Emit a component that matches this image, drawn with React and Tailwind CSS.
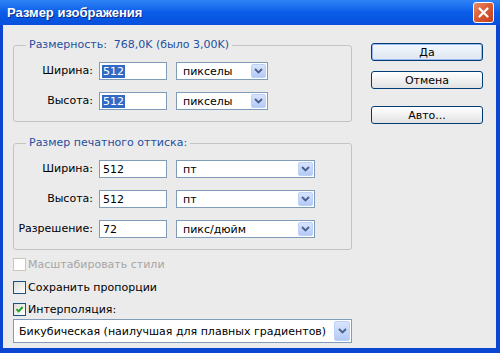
const ui = "font-['DejaVu_Sans',sans-serif] text-[11px]"

function Arrow({ big }) {
  return (
    <span
      className={`absolute right-[1px] top-[1px] bottom-[1px] flex items-center justify-center rounded-[2px] border border-[#bcd0f8] bg-gradient-to-b from-[#d8e4fd] to-[#b3c9f6] ${big ? 'w-[16px]' : 'w-[15px]'}`}
    >
      <svg width="9" height="6" viewBox="0 0 9 6">
        <path d="M1 1 L4.5 4.5 L8 1" fill="none" stroke="#4a5f8a" strokeWidth="1.8" />
      </svg>
    </span>
  )
}

function Select({ value, width, tall }) {
  return (
    <div
      className={`relative flex items-center border border-[#7f9db9] bg-white text-black ${tall ? 'h-[24px] pl-[5px]' : 'h-[18px] pl-[6px]'}`}
      style={{ width }}
    >
      <span className="leading-none">{value}</span>
      <Arrow big={tall} />
    </div>
  )
}

function Field({ label, value, selected, unit, selWidth }) {
  return (
    <div className="flex items-center h-[18px]">
      <span className="w-[79px] text-right text-black">{label}</span>
      <div className="ml-[6px] w-[68px] h-[18px] border border-[#7f9db9] bg-white flex items-center pl-[2px]">
        {selected ? (
          <span className="bg-[#316ac5] text-white leading-[13px] px-[1px]">{value}</span>
        ) : (
          <span className="text-black leading-[13px] px-[1px]">{value}</span>
        )}
      </div>
      <div className="ml-[9px]">
        <Select value={unit} width={selWidth} />
      </div>
    </div>
  )
}

function Group({ title, children, className = '' }) {
  return (
    <fieldset className={`border border-[#c4c4c4] rounded-[3px] px-0 ${className}`}>
      <legend className="ml-[12px] px-[3px] leading-[14px] text-[#1f4f9e] whitespace-pre">{title}</legend>
      <div className="flex flex-col gap-[12px] pt-[10px] pb-[11px]">{children}</div>
    </fieldset>
  )
}

function Check({ label, checked, disabled, className = '' }) {
  return (
    <div className={`flex items-center h-[13px] ${className}`}>
      <span
        className={`w-[13px] h-[13px] border flex items-center justify-center ${
          disabled
            ? 'border-[#cac8bb] bg-white'
            : 'border-[#1c5180] bg-gradient-to-br from-[#dcdcd7] to-white'
        }`}
      >
        {checked && (
          <svg width="9" height="9" viewBox="0 0 9 9">
            <path d="M1.5 4.2 L3.6 6.4 L7.6 2" fill="none" stroke="#21a121" strokeWidth="1.9" />
          </svg>
        )}
      </span>
      <span className={`ml-[2px] leading-[13px] ${disabled ? 'text-[#a6a6a6]' : 'text-black'}`}>{label}</span>
    </div>
  )
}

function Button({ children, primary, className = '' }) {
  return (
    <div
      className={`w-[112px] h-[18px] rounded-[3px] border border-[#003c74] flex items-center justify-center text-black ${
        primary
          ? 'bg-gradient-to-b from-[#f4f8ff] to-[#dfe6f0] shadow-[inset_0_0_0_1px_#9cbaf0]'
          : 'bg-gradient-to-b from-white to-[#e2e2e2]'
      } ${className}`}
    >
      <span className="leading-none">{children}</span>
    </div>
  )
}

export default function App() {
  return (
    <div className={`w-[500px] h-[353px] flex flex-col overflow-hidden bg-[#0a46d2] ${ui}`}>
      <div className="h-[25px] flex items-center justify-between pl-[7px] pr-[6px] bg-gradient-to-b from-[#2f83f5] via-[#0a5ce8] to-[#0750dc]">
        <span className="font-['Liberation_Sans',sans-serif] font-bold text-[13px] text-white [text-shadow:1px_1px_0_#0a2a8a]">
          Размер изображения
        </span>
        <div className="w-[21px] h-[21px] rounded-[3px] border border-white bg-gradient-to-br from-[#e88a66] via-[#d85a32] to-[#c23e18] flex items-center justify-center">
          <svg width="11" height="11" viewBox="0 0 11 11">
            <path d="M1.5 1.5 L9.5 9.5 M9.5 1.5 L1.5 9.5" stroke="white" strokeWidth="2.2" strokeLinecap="round" />
          </svg>
        </div>
      </div>
      <div className="flex-1 ml-[3px] mr-[4px] mb-[5px] bg-[#ebebeb] flex pl-[10px]">
        <div className="w-[339px] pt-[13px] flex flex-col">
          <Group title="Размерность:  768,0K (было 3,00K)">
            <Field label="Ширина:" value="512" selected unit="пикселы" selWidth={92} />
            <Field label="Высота:" value="512" selected unit="пикселы" selWidth={92} />
          </Group>
          <Group title="Размер печатного оттиска:" className="mt-[14px]">
            <Field label="Ширина:" value="512" unit="пт" selWidth={139} />
            <Field label="Высота:" value="512" unit="пт" selWidth={139} />
            <Field label="Разрешение:" value="72" unit="пикс/дюйм" selWidth={139} />
          </Group>
          <Check label="Масштабировать стили" disabled className="mt-[8px]" />
          <Check label="Сохранить пропорции" className="mt-[10px]" />
          <Check label="Интерполяция:" checked className="mt-[9px]" />
          <div className="mt-[3px]">
            <Select value="Бикубическая (наилучшая для плавных градиентов)" width={339} tall />
          </div>
        </div>
        <div className="ml-[19px] pt-[18px] flex flex-col">
          <Button primary>Да</Button>
          <Button className="mt-[10px]">Отмена</Button>
          <Button className="mt-[17px]">Авто...</Button>
        </div>
      </div>
    </div>
  )
}
